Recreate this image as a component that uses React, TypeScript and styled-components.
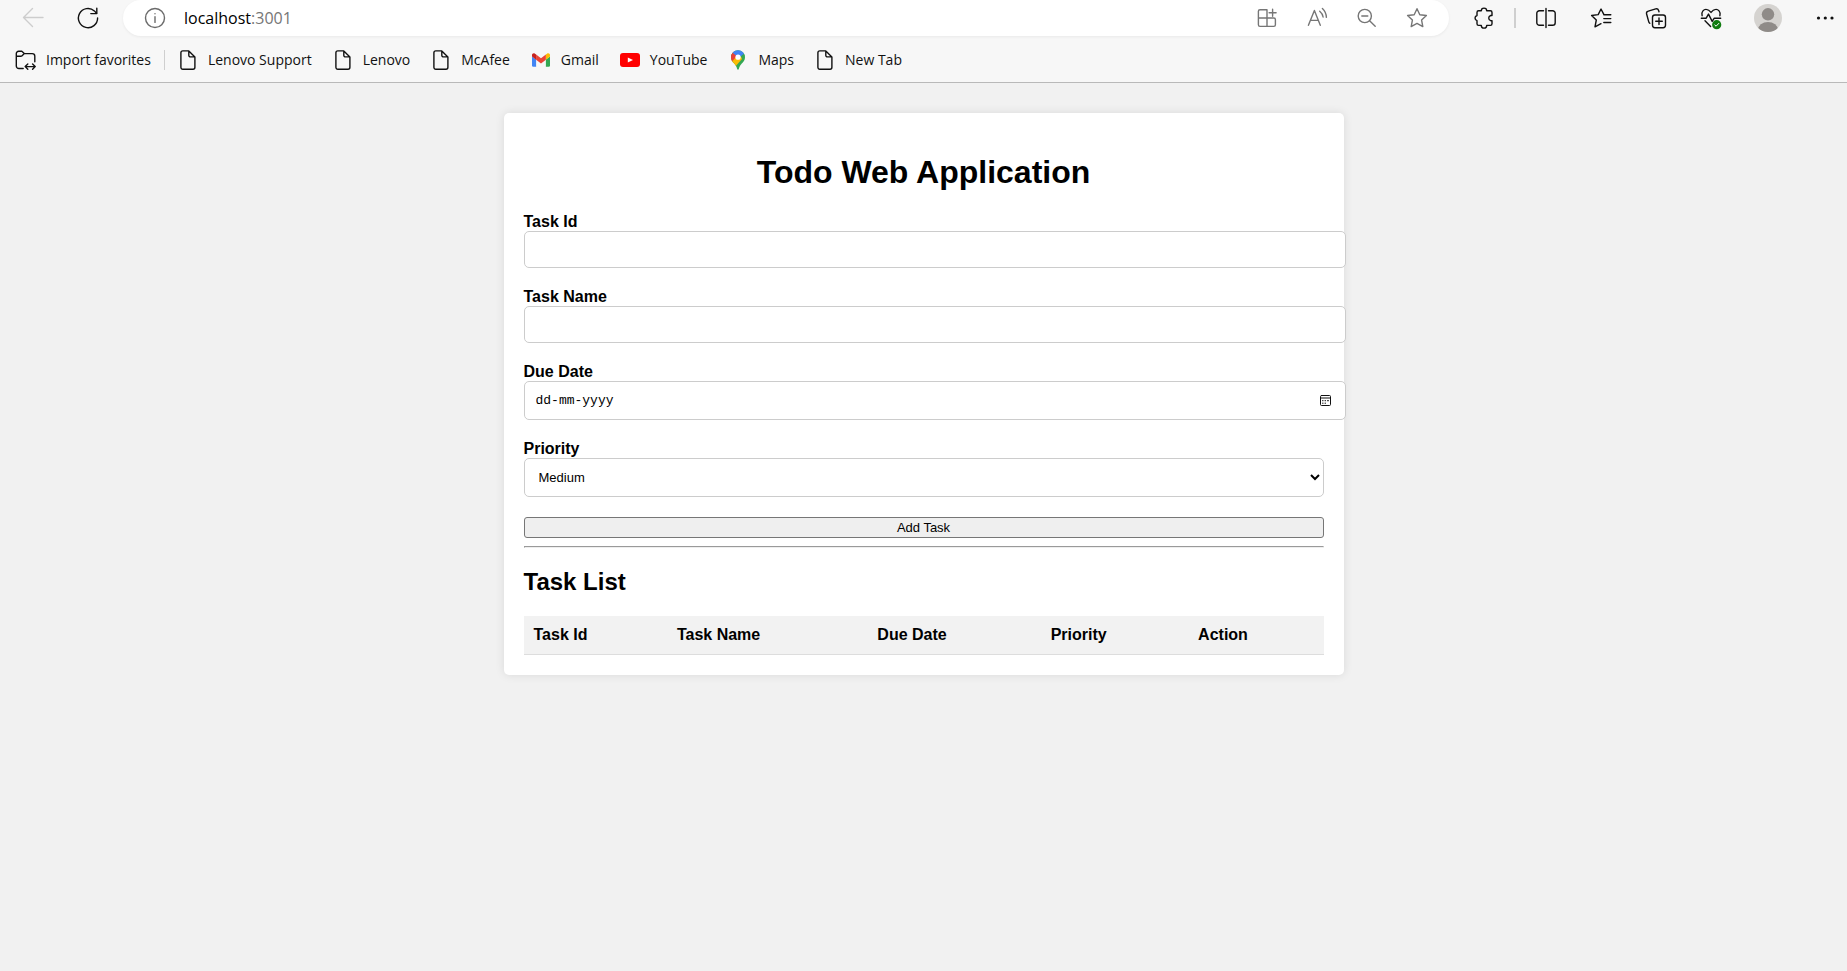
import React, { useState } from "react";
import styled, { createGlobalStyle } from "styled-components";

const GlobalStyle = createGlobalStyle`
  body {
    margin: 0;
    background: #f1f1f1;
    color: #000;
    font-family: "Liberation Sans", Arial, sans-serif;
    font-size: 16px;
    line-height: 18px;
  }
`;

/* ---------- browser chrome ---------- */

const BrowserBar = styled.header`
  height: 82px;
  border-bottom: 1px solid #b9b9b9;
  background: #f7f7f7;
  font-family: "Open Sans", "Segoe UI", sans-serif;
`;

const Toolbar = styled.div`
  display: flex;
  align-items: center;
  gap: 23px;
  height: 36px;
  padding: 0 10px 0 21px;
`;

const ToolGroup = styled.div<{ $gap: number }>`
  display: flex;
  align-items: center;
  gap: ${(p) => p.$gap}px;
`;

const IconButton = styled.button<{ $color?: string }>`
  display: flex;
  padding: 0;
  border: 0;
  background: none;
  color: ${(p) => p.$color ?? "#111"};
`;

const Glyph = styled.svg`
  display: block;
  fill: none;
  stroke: currentColor;
  stroke-width: 1.4;
  stroke-linecap: round;
  stroke-linejoin: round;
`;

const AddressBar = styled.div`
  display: flex;
  flex: 1;
  align-items: center;
  gap: 17px;
  height: 36px;
  padding: 0 20px;
  border-radius: 18px;
  background: #fff;
  box-shadow: 0 1px 3px rgba(0, 0, 0, 0.06);
`;

const Address = styled.div`
  flex: 1;
  font-size: 16px;
  line-height: 24px;
  outline: none;
`;

const Port = styled.span`
  color: #767676;
`;

const Divider = styled.span<{ $width: number; $space: number }>`
  width: ${(p) => p.$width}px;
  height: 20px;
  margin: 0 ${(p) => p.$space}px;
  background: #cfcfcf;
`;

const Favorites = styled.nav`
  display: flex;
  align-items: center;
  gap: 21px;
  height: 48px;
  padding-left: 15px;
`;

const Favorite = styled.a`
  display: flex;
  align-items: center;
  gap: 10px;
  color: #111;
  font-size: 14px;
  line-height: 20px;
  text-decoration: none;
`;

const FavoriteSeparator = styled.span`
  width: 1px;
  height: 20px;
  margin: 0 -8px;
  background: #cfcfcf;
`;

/* ---------- todo page ---------- */

const Card = styled.main`
  max-width: 800px;
  margin: 30px auto;
  padding: 20px;
  border-radius: 5px;
  background: #fff;
  box-shadow: 0 0 10px rgba(0, 0, 0, 0.1);
`;

const Title = styled.h1`
  margin: 21px 0 23px;
  font-size: 32px;
  line-height: 36px;
  text-align: center;
`;

const TaskForm = styled.form`
  display: flex;
  flex-direction: column;
`;

const Field = styled.div`
  position: relative;
  margin-bottom: 20px;
`;

const Label = styled.label`
  display: block;
  font-weight: bold;
`;

const TextInput = styled.input`
  display: block;
  width: 100%;
  height: 15px;
  padding: 10px;
  border: 1px solid #ccc;
  border-radius: 5px;
  background: #fff;
  font: 13px "Liberation Sans", Arial, sans-serif;
`;

const DateInput = styled(TextInput)`
  height: 17px;
  padding-left: 11px;
  padding-right: 9px;
  font-family: "Liberation Mono", monospace;

  &::placeholder {
    color: #000;
    opacity: 1;
  }
`;

const CalendarButton = styled(IconButton)`
  position: absolute;
  right: -9px;
  bottom: 12px;
`;

const Select = styled.select`
  display: block;
  width: 100%;
  height: 39px;
  padding: 10px;
  border: 1px solid #ccc;
  border-radius: 5px;
  background-color: #fff;
  color: #000;
  font: 13px "Liberation Sans", Arial, sans-serif;
`;

const AddButton = styled.button`
  height: 21px;
  padding: 0;
  border: 1px solid #767676;
  border-radius: 3px;
  background: #efefef;
  color: #000;
  font: 13px "Liberation Sans", Arial, sans-serif;
`;

const Rule = styled.hr`
  margin: 8px 0;
`;

const ListTitle = styled.h2`
  margin: 20px 0;
  font-size: 24px;
  line-height: 28px;
`;

const TaskTable = styled.table`
  width: 100%;
  border-collapse: collapse;
`;

const HeadCell = styled.th`
  padding: 10px;
  border-bottom: 1px solid #ddd;
  background: #f2f2f2;
  text-align: left;
`;

/* ---------- icons ---------- */

function Icon({ children, size = 24 }: { children: React.ReactNode; size?: number }) {
  return (
    <Glyph width={size} height={size} viewBox={`0 0 ${size} ${size}`} aria-hidden="true">
      {children}
    </Glyph>
  );
}

const icons = {
  back: <path d="M22 11.5H2.5M11.5 2.5l-9 9 9 9" />,
  refresh: (
    <>
      <path d="M21.6 12A9.6 9.6 0 1 1 18.4 4.9L20.5 7.2" />
      <path d="M20.8 2.3v5.3h-6" />
    </>
  ),
  info: (
    <>
      <circle cx="12" cy="12" r="9.5" />
      <path d="M12 10.8v5.6M12 7.6v.2" />
    </>
  ),
  apps: (
    <path d="M12 3.7H5A1.6 1.6 0 0 0 3.4 5.3v13.5A1.6 1.6 0 0 0 5 20.4h13.8a1.6 1.6 0 0 0 1.6-1.6v-5.2a1.6 1.6 0 0 0-1.6-1.6H3.4M12 3.7v16.7M17.6 3.3v7M14.1 6.8h7" />
  ),
  readAloud: (
    <path d="M3.4 19.3 9.4 4.5l5.9 14.8M5.4 14.4h7.9M14.7 5.2a9.5 9.5 0 0 1 3.4 5.8M17.4 2.6a13 13 0 0 1 4 8.8" />
  ),
  zoomOut: (
    <>
      <circle cx="9.8" cy="10" r="6.6" />
      <path d="M6.8 10h6M14.6 14.8l5.6 5.4" />
    </>
  ),
  star: (
    <path d="m12 2.7 2.8 6 6.6.8-4.8 4.6 1.2 6.5-5.8-3.2-5.8 3.2 1.2-6.5-4.8-4.6 6.6-.8z" />
  ),
  puzzle: (
    <path d="M6.6 4.8h2.7a2.7 2.7 0 0 1 5.4 0h3.7A1.6 1.6 0 0 1 20 6.4v3.1h-1.3a2.7 2.7 0 0 0 0 5.2H20v3.1a1.6 1.6 0 0 1-1.6 1.6h-3.7a2.7 2.7 0 0 1-5.4 0H6.6A1.6 1.6 0 0 1 5 17.8v-3.1a2.7 2.7 0 0 1 0-5.2V6.4a1.6 1.6 0 0 1 1.6-1.6z" />
  ),
  split: (
    <path d="M9.5 4.7H5.4a2.6 2.6 0 0 0-2.6 2.6v9.4a2.6 2.6 0 0 0 2.6 2.6h4.1M14.5 4.7h4.1a2.6 2.6 0 0 1 2.6 2.6v9.4a2.6 2.6 0 0 1-2.6 2.6h-4.1M12 2.5v19" />
  ),
  favorites: (
    <path d="M17.2 8.7 14.8 8.4 12 3 9.2 8.6l-6.6.9L7.3 14 6 20.8l6-3.1M14.8 8.7h7M14.8 12.6h7M14.8 16.5h7" />
  ),
  collections: (
    <>
      <path d="M5.8 17.3A3 3 0 0 1 4.7 15.6L2.6 8a2.4 2.4 0 0 1 1.7-2.9l7.4-2.2a2.4 2.4 0 0 1 2.9 1.5l.4 1.4" />
      <rect x="8.5" y="9" width="13" height="12.7" rx="2.4" />
      <path d="M15 12v6.6M11.7 15.3h6.6" />
    </>
  ),
  essentials: (
    <>
      <path d="M3.1 9.7C2 5.4 5 3.2 7.3 3.4c2.5.1 3.8 1.8 4.7 3 .9-1.2 2.2-2.9 4.7-3 2.3-.2 5.3 2 4.2 6.3M2.3 12.2h4.9l2.3-4.1 3.7 7.3 2.1-3.2h6.4M6 14.8l5.6 5.6" />
      <circle cx="17.7" cy="18.7" r="4.6" fill="#107c10" stroke="none" />
      <path d="m15.8 19 1.3 1.2 2.7-2.8" stroke="#fff" strokeWidth="1" />
    </>
  ),
  more: (
    <g fill="currentColor" stroke="none">
      <circle cx="5.5" cy="12" r="1.6" />
      <circle cx="12.3" cy="12" r="1.6" />
      <circle cx="19" cy="12" r="1.6" />
    </g>
  ),
};

const ImportIcon = () => (
  <Icon size={21}>
    <path d="M8.2 18.5H3.9A2.6 2.6 0 0 1 1.3 15.9V3.6A2.3 2.3 0 0 1 3.6 1.3h3.2l2.5 2.3h7.9a2.6 2.6 0 0 1 2.6 2.6v5.6M1.3 6.3h4.4a2 2 0 0 0 1.4-.6l2.2-2.1M10.5 16.6h9.4M12.8 14l-2.6 2.6 2.6 2.6M17.6 14l2.6 2.6-2.6 2.6" />
  </Icon>
);

const PageIcon = () => (
  <Icon size={20}>
    <path d="M4.8.9h6l6.1 6v10.4a1.9 1.9 0 0 1-1.9 1.9H4.8a1.9 1.9 0 0 1-1.9-1.9V2.8A1.9 1.9 0 0 1 4.8.9zM10.8.9v4.3a1.7 1.7 0 0 0 1.7 1.7h4.4" />
  </Icon>
);

const GmailIcon = () => (
  <svg width="20" height="20" viewBox="0 0 20 20" aria-hidden="true">
    <path fill="#4285f4" d="M1 6.5v8.900A1.300 1.300 0 0 0 2.300 16.700h2.800V9.600z" />
    <path fill="#34a853" d="M14.900 16.700h2.800A1.300 1.300 0 0 0 19 15.400V6.500l-4.100 3.100z" />
    <path fill="#ea4335" d="M5.100 9.700V4.500L10 8.200l4.900-3.700v5.200L10 13.400z" />
    <path fill="#c5221f" d="M1 5v1.600l4.100 3.100V4.500L4 3.700C2.700 2.700 1 3.500 1 5z" />
    <path fill="#fbbc04" d="M14.900 4.500v5.200L19 6.600V5c0-1.500-1.700-2.300-3-1.300z" />
  </svg>
);

const YouTubeIcon = () => (
  <svg width="20" height="20" viewBox="0 0 20 20" aria-hidden="true">
    <rect y="3" width="20" height="14" rx="3" fill="#f00" />
    <path fill="#fff" d="M7.800 7.400v5.200L13 10z" />
  </svg>
);

const MapsIcon = () => (
  <svg width="20" height="20" viewBox="0 0 20 20" aria-hidden="true">
    <clipPath id="pin">
      <path d="M10 .2a7 7 0 0 0-7 7c0 3 1.400 4.500 3.200 6.400C7.700 15.300 8.600 16.900 9.100 18.800c.3 1.200 1.500 1.200 1.800 0 .5-1.900 1.400-3.500 2.900-5.200C15.600 11.700 17 10.200 17 7.200a7 7 0 0 0-7-7z" />
    </clipPath>
    <g clipPath="url(#pin)">
      <path fill="#34a853" d="M0 0h20v20H0z" />
      <path fill="#fbbc04" d="M3 11 11 2l3 7-8 9-5-4z" />
      <path fill="#ea4335" d="M0 0h4.600l5.400 5-6 6.500H0z" />
      <path fill="#4285f4" d="M4.600 2.700 8.200 5.700 10.500 8 16.300 3.500 14-1H5z" />
    </g>
    <circle cx="10" cy="7.200" r="2.600" fill="#fff" />
  </svg>
);

const Avatar = () => (
  <svg width="28" height="28" viewBox="0 0 28 28" aria-hidden="true">
    <clipPath id="avatar">
      <circle cx="14" cy="14" r="14" />
    </clipPath>
    <circle cx="14" cy="14" r="14" fill="#d5d3d0" />
    <circle cx="14" cy="10.300" r="6.200" fill="#8f8b88" />
    <ellipse cx="14" cy="26" rx="10" ry="8" fill="#8f8b88" clipPath="url(#avatar)" />
  </svg>
);

const CalendarIcon = () => (
  <Icon size={14}>
    <rect x="1.500" y="1.500" width="10" height="10" rx="1" strokeWidth="1" />
    <path d="M1.500 4h10" strokeWidth="1" />
    <path d="M3.500 6.700h.6M6 6.700h.6M8.500 6.700h1M3.500 9.200h.6M6 9.200h.6" strokeWidth="1" />
  </Icon>
);

type IconName = keyof typeof icons;

function ToolButton({ name, label, color }: { name: IconName; label: string; color?: string }) {
  return (
    <IconButton type="button" aria-label={label} $color={color}>
      <Icon>{icons[name]}</Icon>
    </IconButton>
  );
}

const favorites = [
  { label: "Lenovo Support", Mark: PageIcon },
  { label: "Lenovo", Mark: PageIcon },
  { label: "McAfee", Mark: PageIcon },
  { label: "Gmail", Mark: GmailIcon },
  { label: "YouTube", Mark: YouTubeIcon },
  { label: "Maps", Mark: MapsIcon },
  { label: "New Tab", Mark: PageIcon },
];

const columns = ["Task Id", "Task Name", "Due Date", "Priority", "Action"];

export default function App() {
  const [priority, setPriority] = useState("Medium");

  return (
    <>
      <GlobalStyle />
      <BrowserBar>
        <Toolbar>
          <ToolGroup $gap={31}>
            <ToolButton name="back" label="Back" color="#cdcdcd" />
            <ToolButton name="refresh" label="Refresh" />
          </ToolGroup>
          <AddressBar>
            <ToolButton name="info" label="View site information" color="#6b6b6b" />
            <Address role="textbox" aria-label="Address" contentEditable suppressContentEditableWarning>
              localhost<Port>:3001</Port>
            </Address>
            <ToolGroup $gap={26}>
              <ToolButton name="apps" label="App available" color="#767676" />
              <ToolButton name="readAloud" label="Read aloud" color="#767676" />
              <ToolButton name="zoomOut" label="Zoom out" color="#767676" />
              <ToolButton name="star" label="Add to favorites" color="#767676" />
            </ToolGroup>
          </AddressBar>
          <ToolGroup $gap={0}>
            <ToolButton name="puzzle" label="Extensions" />
            <Divider $width={2} $space={18} />
            <ToolGroup $gap={31}>
              <ToolButton name="split" label="Split screen" />
              <ToolButton name="favorites" label="Favorites" />
              <ToolButton name="collections" label="Collections" />
              <ToolButton name="essentials" label="Browser essentials" />
              <IconButton type="button" aria-label="Profile">
                <Avatar />
              </IconButton>
              <ToolButton name="more" label="Settings and more" />
            </ToolGroup>
          </ToolGroup>
        </Toolbar>
        <Favorites aria-label="Favorites bar">
          <Favorite href="#import">
            <ImportIcon />
            Import favorites
          </Favorite>
          <FavoriteSeparator />
          {favorites.map(({ label, Mark }) => (
            <Favorite key={label} href="#">
              <Mark />
              {label}
            </Favorite>
          ))}
        </Favorites>
      </BrowserBar>

      <Card>
        <Title>Todo Web Application</Title>
        <TaskForm onSubmit={(e) => e.preventDefault()}>
          <Field>
            <Label htmlFor="task-id">Task Id</Label>
            <TextInput id="task-id" type="text" />
          </Field>
          <Field>
            <Label htmlFor="task-name">Task Name</Label>
            <TextInput id="task-name" type="text" />
          </Field>
          <Field>
            <Label htmlFor="due-date">Due Date</Label>
            <DateInput id="due-date" type="text" placeholder="dd-mm-yyyy" />
            <CalendarButton type="button" aria-label="Open calendar">
              <CalendarIcon />
            </CalendarButton>
          </Field>
          <Field>
            <Label htmlFor="priority">Priority</Label>
            <Select id="priority" value={priority} onChange={(e) => setPriority(e.target.value)}>
              <option>High</option>
              <option>Medium</option>
              <option>Low</option>
            </Select>
          </Field>
          <AddButton type="submit">Add Task</AddButton>
        </TaskForm>
        <Rule />
        <ListTitle>Task List</ListTitle>
        <TaskTable>
          <thead>
            <tr>
              {columns.map((name) => (
                <HeadCell key={name} scope="col">
                  {name}
                </HeadCell>
              ))}
            </tr>
          </thead>
        </TaskTable>
      </Card>
    </>
  );
}
